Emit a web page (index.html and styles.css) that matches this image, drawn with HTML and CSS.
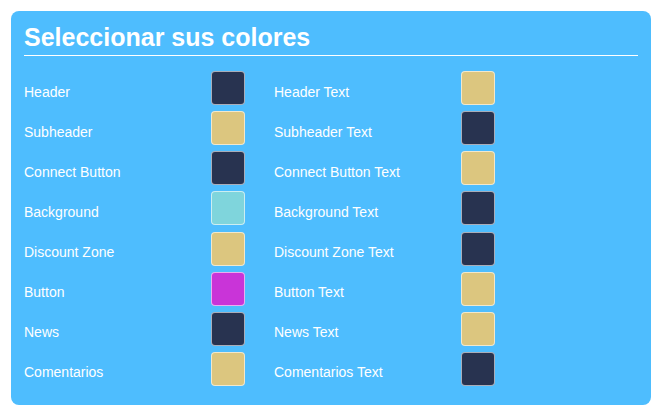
FILE: index.html
```html
<!DOCTYPE html>
<html lang="es">
<head>
<meta charset="utf-8">
<title>Seleccionar sus colores</title>
<link rel="stylesheet" href="styles.css">
</head>
<body>
<div class="card">
  <h1 class="title">Seleccionar sus colores</h1>
  <div class="grid">
    <div class="item"><span class="label">Header</span><span class="swatch dark"></span></div>
    <div class="item"><span class="label">Header Text</span><span class="swatch tan"></span></div>
    <div class="item"><span class="label">Subheader</span><span class="swatch tan"></span></div>
    <div class="item"><span class="label">Subheader Text</span><span class="swatch dark"></span></div>
    <div class="item"><span class="label">Connect Button</span><span class="swatch dark"></span></div>
    <div class="item"><span class="label">Connect Button Text</span><span class="swatch tan"></span></div>
    <div class="item"><span class="label">Background</span><span class="swatch cyan"></span></div>
    <div class="item"><span class="label">Background Text</span><span class="swatch dark"></span></div>
    <div class="item"><span class="label">Discount Zone</span><span class="swatch tan"></span></div>
    <div class="item"><span class="label">Discount Zone Text</span><span class="swatch dark"></span></div>
    <div class="item"><span class="label">Button</span><span class="swatch magenta"></span></div>
    <div class="item"><span class="label">Button Text</span><span class="swatch tan"></span></div>
    <div class="item"><span class="label">News</span><span class="swatch dark"></span></div>
    <div class="item"><span class="label">News Text</span><span class="swatch tan"></span></div>
    <div class="item"><span class="label">Comentarios</span><span class="swatch tan"></span></div>
    <div class="item"><span class="label">Comentarios Text</span><span class="swatch dark"></span></div>
  </div>
</div>
</body>
</html>
```

FILE: styles.css
```css
html, body {
  margin: 0;
  padding: 0;
  background: #ffffff;
}
body {
  font-family: "Liberation Sans", Arial, sans-serif;
  color: #ffffff;
}
.card {
  box-sizing: border-box;
  width: 640px;
  height: 394px;
  margin: 11px 0 0 11px;
  padding: 11px 13px 0 13px;
  background: #4ebdfe;
  border-radius: 8px;
}
.title {
  margin: 0;
  padding: 0 0 3px 0;
  font-size: 25px;
  line-height: 30px;
  font-weight: bold;
  border-bottom: 1px solid #ffffff;
}
.grid {
  margin-top: 12px;
  display: grid;
  grid-template-columns: 250px 250px;
  grid-auto-rows: 40.14px;
}
.item {
  display: grid;
  grid-template-columns: 187px 34px;
  align-items: center;
}
.label {
  font-size: 14px;
  line-height: 16px;
  padding-top: 7px;
}
.swatch {
  box-sizing: border-box;
  width: 34px;
  height: 34px;
  border: 1px solid rgba(255, 255, 255, 0.6);
  border-radius: 4px;
}
.dark { background: #283350; }
.tan { background: #dcc67f; }
.cyan { background: #7fd5dc; }
.magenta { background: #c934d8; }
```
